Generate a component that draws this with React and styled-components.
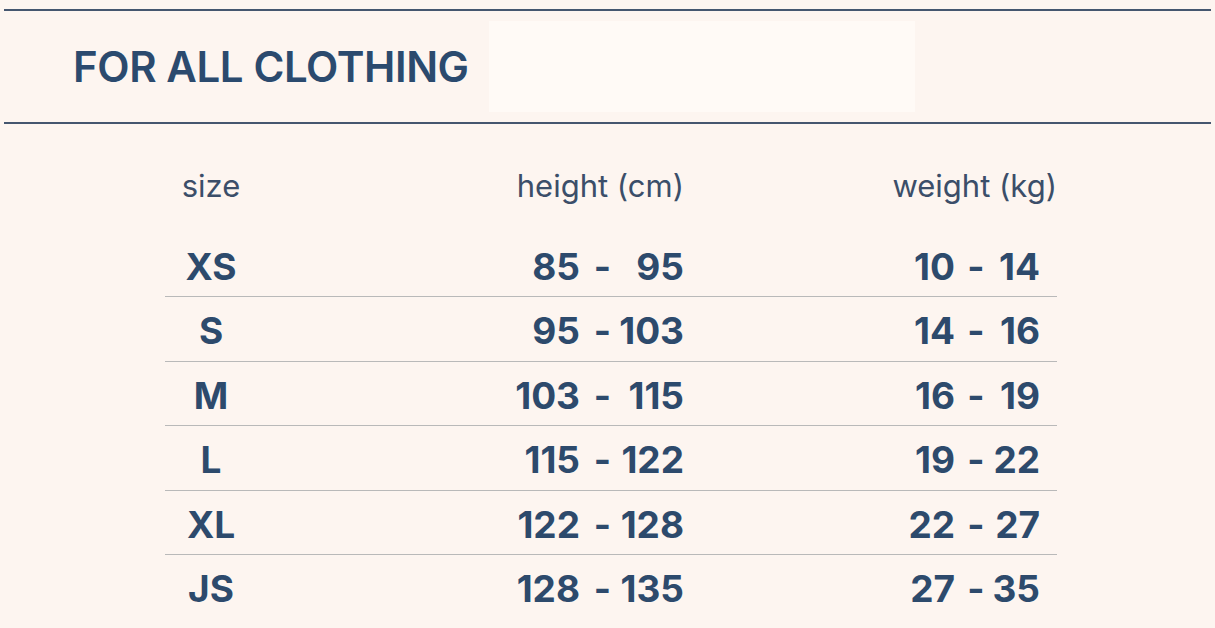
import React from 'react'
import styled, { createGlobalStyle } from 'styled-components'

const sizes = [
  { size: 'XS', h: ['85', '95'], w: ['10', '14'] },
  { size: 'S', h: ['95', '103'], w: ['14', '16'] },
  { size: 'M', h: ['103', '115'], w: ['16', '19'] },
  { size: 'L', h: ['115', '122'], w: ['19', '22'] },
  { size: 'XL', h: ['122', '128'], w: ['22', '27'] },
  { size: 'JS', h: ['128', '135'], w: ['27', '35'] },
]

const App = () => {
  return (
    <Page>
      <GlobalStyle />
      <Rule />
      <Header>
        <Title>FOR ALL CLOTHING</Title>
        <Panel />
      </Header>
      <Rule />
      <Table>
        <HeadRow>
          <HeadCell>size</HeadCell>
          <HeadCell span="2 / 5" align="right">height (cm)</HeadCell>
          <HeadCell span="5 / 9" align="right">weight (kg)</HeadCell>
        </HeadRow>
        {sizes.map((row, i) => (
          <Row key={row.size} last={i === sizes.length - 1}>
            <Cell>{row.size}</Cell>
            <Cell align="right">{row.h[0]}</Cell>
            <Dash shift={8}>-</Dash>
            <Cell align="right">{row.h[1]}</Cell>
            <Cell align="right">{row.w[0]}</Cell>
            <Dash shift={7}>-</Dash>
            <Cell align="right">{row.w[1]}</Cell>
          </Row>
        ))}
      </Table>
    </Page>
  )
}

export default App

const GlobalStyle = createGlobalStyle`
body{
  margin:0;
  background:#fdf5f0;
  font-family:Inter, "Noto Sans", sans-serif;
}
`

const Page = styled.div`
width:1215px;
height:628px;
overflow:hidden;
padding-top:9px;
box-sizing:border-box;
`

const Rule = styled.div`
height:2px;
margin:0 4px;
background:#45566f;
`

const Header = styled.div`
display:flex;
align-items:center;
height:111px;
padding-left:73px;
gap:20px;
`

const Title = styled.h1`
margin:0;
font-size:42px;
font-weight:600;
color:#2b4a6e;
letter-spacing:-0.4px;
line-height:1;
`

const Panel = styled.div`
width:426px;
height:91px;
background:#fffaf6;
`

const Table = styled.div`
width:892px;
margin:0 0 0 165px;
`

const grid = `
display:grid;
grid-template-columns:92px 323px 37px 67px 271px 35px 50px 17px;
`

const HeadRow = styled.div`
${grid}
padding-top:46px;
height:62.5px;
`

const HeadCell = styled.div`
grid-column:${p => p.span || '1 / 2'};
text-align:${p => p.align || 'center'};
font-size:31px;
line-height:31px;
font-weight:400;
color:#3b4e69;
`

const Row = styled.div`
${grid}
padding-top:15px;
height:37px;
padding-bottom:11.5px;
border-bottom:1px solid ${p => (p.last ? 'transparent' : '#b9b9b9')};
`

const Cell = styled.div`
text-align:${p => p.align || 'center'};
font-size:37px;
line-height:37px;
font-weight:700;
color:#2d4a6c;
white-space:nowrap;
`

const Dash = styled(Cell)`
text-align:center;
padding-left:${p => p.shift}px;
`
